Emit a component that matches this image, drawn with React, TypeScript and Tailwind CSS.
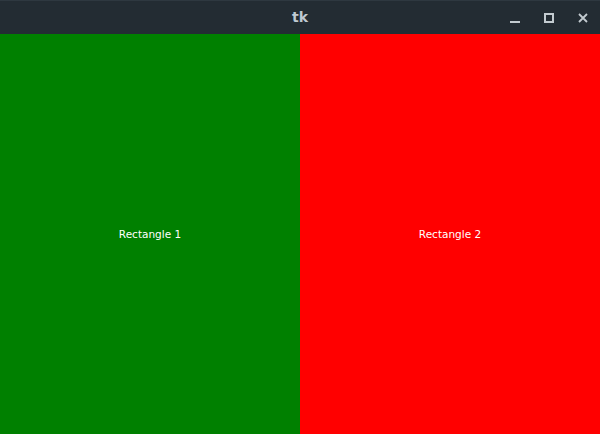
export default function App() {
  return (
    <div className="flex h-[434px] w-[600px] flex-col overflow-hidden bg-[#232c33]">
      {/* window title bar */}
      <div className="relative flex h-[34px] shrink-0 items-center justify-center border-t border-[#2e3840]">
        <span className="text-[14px] font-bold text-[#bfc9d1]" style={{ fontFamily: '"DejaVu Sans", sans-serif' }}>
          tk
        </span>
        <div className="absolute right-[12px] top-0 flex h-full items-center gap-[24px] text-[#c3cbd0]">
          <svg width="10" height="10" viewBox="0 0 10 10">
            <rect x="0" y="8" width="10" height="2" fill="currentColor" />
          </svg>
          <svg width="10" height="10" viewBox="0 0 10 10">
            <rect x="1" y="1" width="8" height="8" fill="none" stroke="currentColor" strokeWidth="2" />
          </svg>
          <svg width="10" height="10" viewBox="0 0 10 10">
            <path d="M1 1 L9 9 M9 1 L1 9" stroke="currentColor" strokeWidth="1.8" />
          </svg>
        </div>
      </div>

      {/* canvas with two rectangles */}
      <div className="flex flex-1" style={{ fontFamily: '"DejaVu Sans", sans-serif' }}>
        <div className="flex flex-1 items-center justify-center bg-[#008000] pt-[2px] text-[10.5px] text-white">Rectangle 1</div>
        <div className="flex flex-1 items-center justify-center bg-[#ff0000] pt-[2px] text-[10.5px] text-white">Rectangle 2</div>
      </div>
    </div>
  );
}
